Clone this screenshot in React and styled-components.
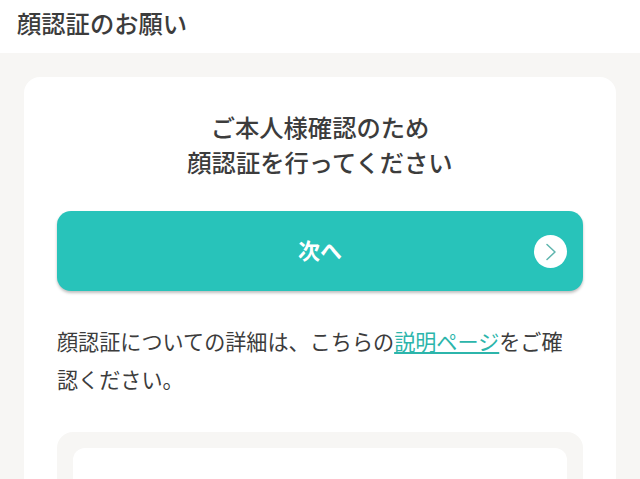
import React from 'react'
import styled, { createGlobalStyle } from 'styled-components'

const Global = createGlobalStyle`
  html, body {
    margin: 0;
    padding: 0;
    height: 100%;
    overflow: hidden;
    background: #f7f6f4;
  }
  body {
    font-family: "Noto Sans CJK JP", "Noto Sans", sans-serif;
    color: #3c3c3c;
  }
`
const Page = styled.div`
  width: 640px;
  height: 479px;
  overflow: hidden;
`
const Header = styled.header`
  height: 53px;
  background: #fff;
  display: flex;
  align-items: center;
  padding: 0 17px 8px;
  box-sizing: border-box;
  font-size: 24.3px;
  font-weight: 500;
`
const Main = styled.main`
  padding: 24px 24px 0;
`
const Card = styled.section`
  background: #fff;
  border-radius: 16px;
  padding: 32px 33px;
`
const Title = styled.h1`
  margin: 0;
  font-size: 24.3px;
  line-height: 35px;
  font-weight: 500;
  text-align: center;
`
const NextButton = styled.button`
  position: relative;
  display: block;
  width: 100%;
  height: 80px;
  margin-top: 32px;
  padding: 0 0 4px;
  border: 0;
  border-radius: 14px;
  background: #28c3ba;
  box-shadow: 0 2px 3px rgba(0, 0, 0, 0.25);
  color: #fff;
  font: 700 22px "Noto Sans CJK JP", sans-serif;
`
const Arrow = styled.span`
  position: absolute;
  right: 16px;
  top: 24px;
  width: 33px;
  height: 33px;
  border-radius: 50%;
  background: #fff;
  display: flex;
  align-items: center;
  justify-content: center;
`
const Body = styled.p`
  margin: 31px 0 0;
  font-size: 21.12px;
  line-height: 38px;
`
const TextLink = styled.a`
  color: #2cb5ab;
  text-decoration: underline;
`
const Panel = styled.div`
  margin-top: 34px;
  background: #f7f6f4;
  border-radius: 16px;
  padding: 16px;
`
const PanelInner = styled.div`
  background: #fff;
  border-radius: 12px;
  height: 120px;
`

export default function App() {
  return (
    <Page>
      <Global />
      <Header>顔認証のお願い</Header>
      <Main>
        <Card>
          <Title>
            ご本人様確認のため
            <br />
            顔認証を行ってください
          </Title>
          <NextButton>
            次へ
            <Arrow>
              <svg width="16" height="18" viewBox="0 0 16 18" fill="none">
                <path d="M4 1.5l8 7.5-8 7.5" stroke="#5fb5ae" strokeWidth="1.5" strokeLinecap="round" strokeLinejoin="round" />
              </svg>
            </Arrow>
          </NextButton>
          <Body>
            顔認証についての詳細は、こちらの<TextLink>説明ページ</TextLink>をご確認ください。
          </Body>
          <Panel>
            <PanelInner />
          </Panel>
        </Card>
      </Main>
    </Page>
  )
}
